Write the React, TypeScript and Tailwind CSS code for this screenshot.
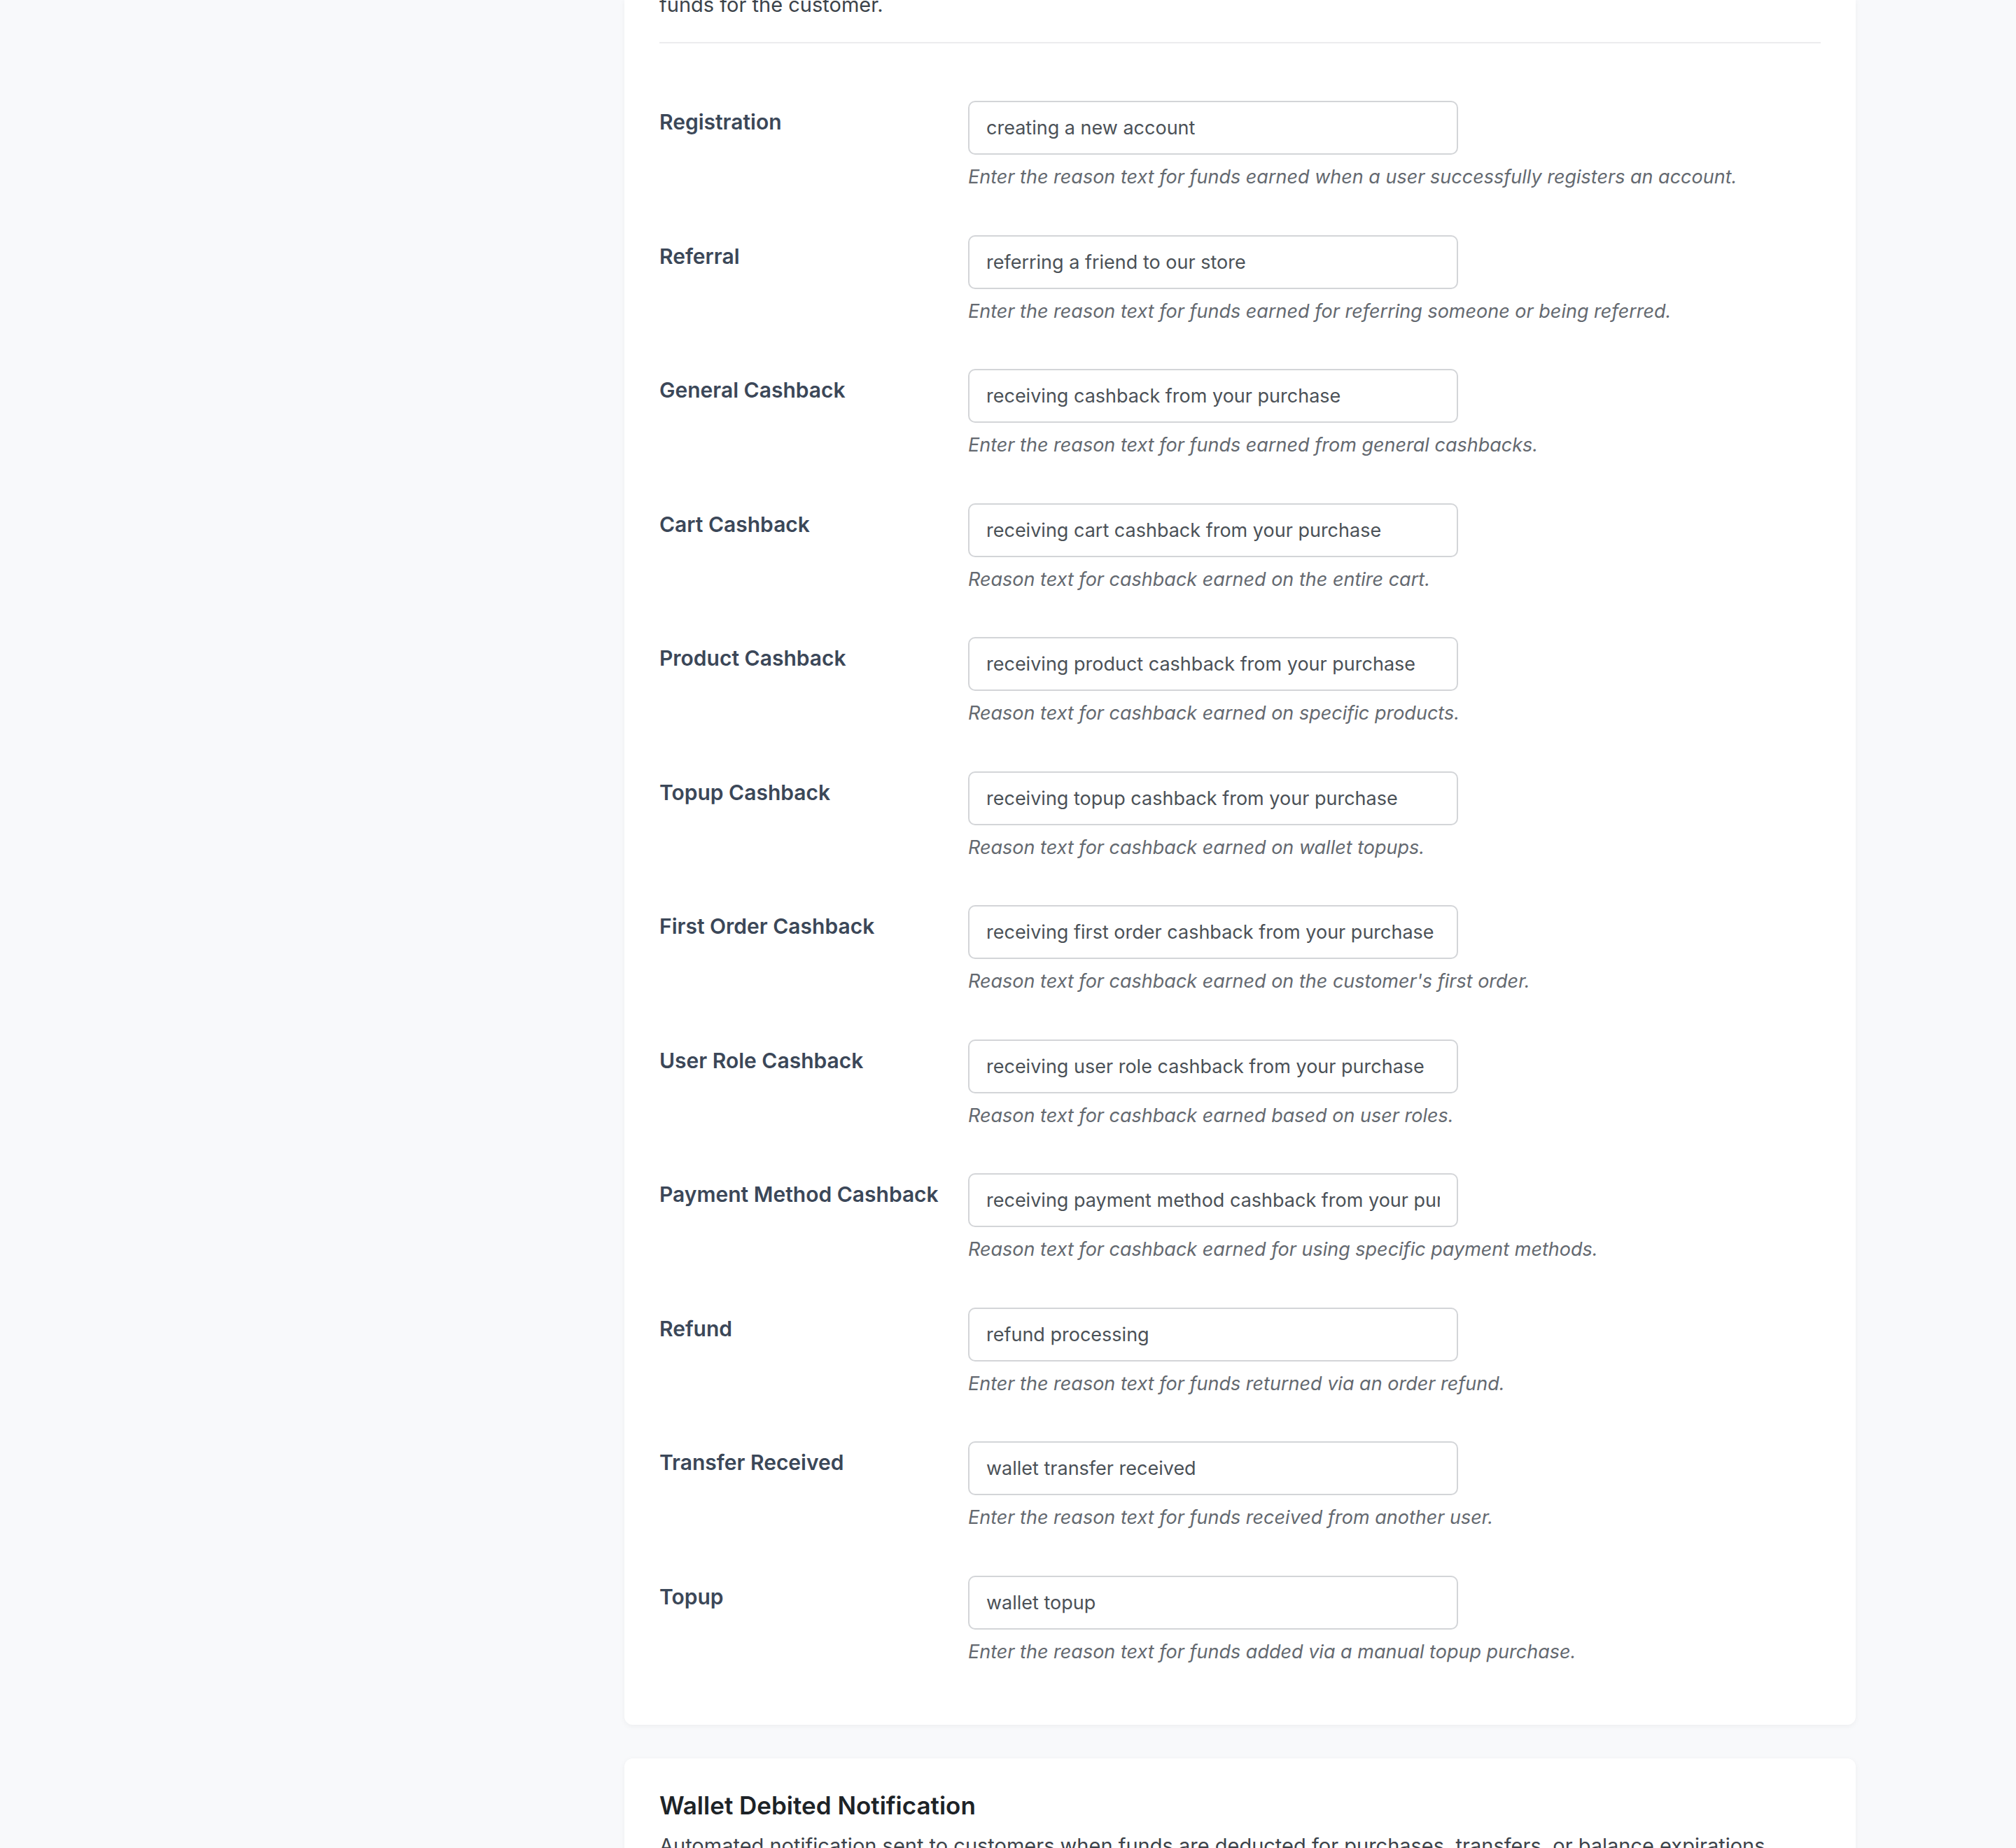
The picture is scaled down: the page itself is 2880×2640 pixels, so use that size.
const rows = [
  {
    label: "Registration",
    value: "creating a new account",
    hint: "Enter the reason text for funds earned when a user successfully registers an account.",
  },
  {
    label: "Referral",
    value: "referring a friend to our store",
    hint: "Enter the reason text for funds earned for referring someone or being referred.",
  },
  {
    label: "General Cashback",
    value: "receiving cashback from your purchase",
    hint: "Enter the reason text for funds earned from general cashbacks.",
  },
  {
    label: "Cart Cashback",
    value: "receiving cart cashback from your purchase",
    hint: "Reason text for cashback earned on the entire cart.",
  },
  {
    label: "Product Cashback",
    value: "receiving product cashback from your purchase",
    hint: "Reason text for cashback earned on specific products.",
  },
  {
    label: "Topup Cashback",
    value: "receiving topup cashback from your purchase",
    hint: "Reason text for cashback earned on wallet topups.",
  },
  {
    label: "First Order Cashback",
    value: "receiving first order cashback from your purchase",
    hint: "Reason text for cashback earned on the customer's first order.",
  },
  {
    label: "User Role Cashback",
    value: "receiving user role cashback from your purchase",
    hint: "Reason text for cashback earned based on user roles.",
  },
  {
    label: "Payment Method Cashback",
    value: "receiving payment method cashback from your purchase",
    hint: "Reason text for cashback earned for using specific payment methods.",
  },
  {
    label: "Refund",
    value: "refund processing",
    hint: "Enter the reason text for funds returned via an order refund.",
  },
  {
    label: "Transfer Received",
    value: "wallet transfer received",
    hint: "Enter the reason text for funds received from another user.",
  },
  {
    label: "Topup",
    value: "wallet topup",
    hint: "Enter the reason text for funds added via a manual topup purchase.",
  },
];

const ReasonRow = ({ label, value, hint }: { label: string; value: string; hint: string }) => {
  return (
    <div className="grid grid-cols-[441px_1fr] pt-[30px] pb-[34.5px]">
      <label className="mt-[10px] text-[30px] leading-[40px] font-semibold text-[#3b4758]">
        {label}
      </label>
      <div>
        <input
          readOnly
          value={value}
          className="block w-[700px] h-[77px] rounded-[10px] border-2 border-[#d3d5d8] bg-white px-[24px] text-[27px] text-[#4b5157] outline-none"
        />
        <p className="mt-[14px] text-[27px] leading-[36px] italic text-[#646970]">{hint}</p>
      </div>
    </div>
  );
};

export default function App() {
  return (
    <div className="h-[2640px] overflow-hidden bg-[#f8f9fb] font-['Inter','Noto_Sans',sans-serif]">
      <div className="ml-[892px] w-[1759px] flex flex-col gap-[48px]">
        <section className="bg-white rounded-b-[12px] px-[50px] pb-[52px] shadow-[0_2px_8px_rgba(0,0,0,0.05)]">
          <p className="-mt-[14px] text-[29px] leading-[42px] text-[#3c434a]">funds for the customer.</p>
          <div className="mt-[32px] h-[2px] bg-[#ececee]" />
          <div className="mt-[52px]">
            {rows.map((r) => (
              <ReasonRow key={r.label} {...r} />
            ))}
          </div>
        </section>

        <section className="bg-white rounded-[12px] px-[50px] pt-[45px] pb-[60px] shadow-[0_2px_8px_rgba(0,0,0,0.05)]">
          <h2 className="text-[35px] leading-[44px] font-semibold text-[#1d2327]">
            Wallet Debited Notification
          </h2>
          <p className="mt-[15px] text-[29px] leading-[42px] text-[#3c434a]">
            Automated notification sent to customers when funds are deducted for purchases, transfers, or balance
            expirations.
          </p>
        </section>
      </div>
    </div>
  );
}
